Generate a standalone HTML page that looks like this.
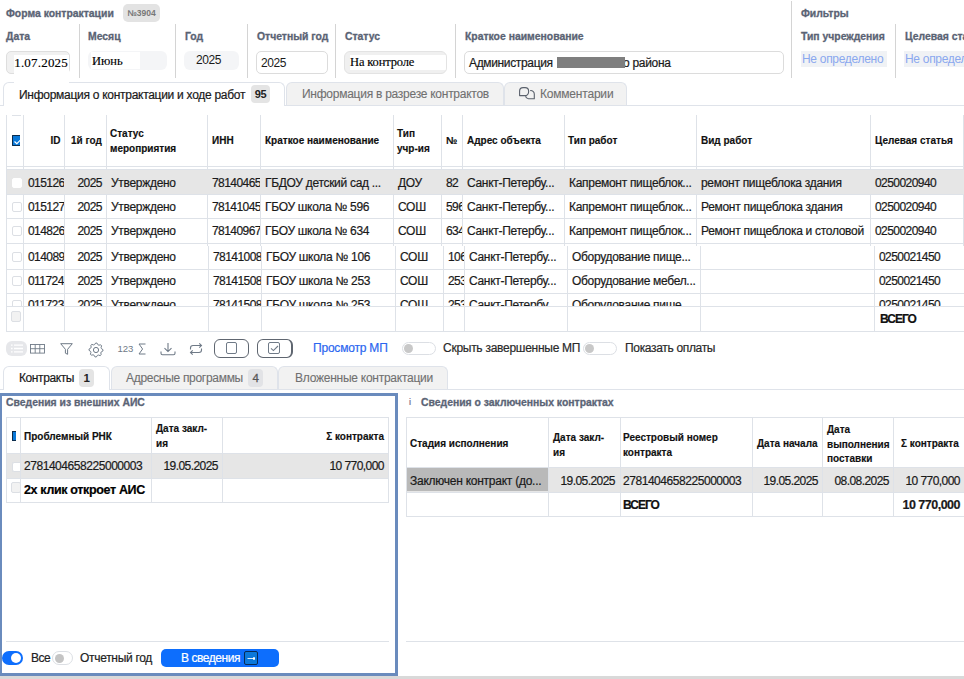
<!DOCTYPE html><html><head><meta charset="utf-8"><style>
*{box-sizing:border-box;margin:0;padding:0}
html,body{width:964px;height:679px;overflow:hidden;background:#fff;font-family:"Liberation Sans",sans-serif;color:#1a1a1a;position:relative}
.a{position:absolute}
.lbl{position:absolute;font-weight:bold;font-size:10.4px;color:#5a6374;white-space:nowrap;line-height:12px;-webkit-text-stroke:0.3px #5a6374}
.vsep{position:absolute;width:1px;background:#d4d4d4}
.t{position:absolute;white-space:nowrap;font-size:12px;letter-spacing:-0.3px;line-height:14px;-webkit-text-stroke:0.2px currentColor}
.th{position:absolute;white-space:nowrap;font-size:10px;font-weight:bold;line-height:14px;color:#111;-webkit-text-stroke:0.15px #111}
.tab{position:absolute;border:1px solid #dfe3ea;border-bottom:none;border-radius:6px 6px 0 0;background:#f2f2f2;color:#707070;font-size:12px;letter-spacing:-0.25px;white-space:nowrap}
.tab.on{background:#fff;color:#1a1a1a}
.tab:not(.on) .t{-webkit-text-stroke:0.1px #707070}
.badge{position:absolute;background:#e4e4e4;border-radius:4px;font-weight:bold;font-size:11px;color:#222;text-align:center}
.hl{position:absolute;height:1px;background:#dee2e8}
.vl{position:absolute;width:1px;background:#dee2e8}
.cb{position:absolute;width:10px;height:10px;border:1px solid #dcdfe4;border-radius:2px;background:#fff}
.clip{position:absolute;overflow:hidden}
.num{letter-spacing:-0.55px}
</style></head><body>
<div class="lbl" style="left:6px;top:8px">Форма контрактации</div>
<div class="a" style="left:123px;top:4px;width:37px;height:18px;background:#e3e3e3;border-radius:5px;font-size:8.5px;font-weight:bold;color:#777;text-align:center;line-height:18px">№3904</div>
<div class="vsep" style="left:79px;top:24px;height:54px"></div>
<div class="vsep" style="left:175px;top:24px;height:54px"></div>
<div class="vsep" style="left:247px;top:24px;height:54px"></div>
<div class="vsep" style="left:335px;top:24px;height:54px"></div>
<div class="vsep" style="left:455px;top:24px;height:54px"></div>
<div class="vsep" style="left:895px;top:24px;height:54px"></div>
<div class="vsep" style="left:791px;top:1px;height:77px"></div>
<div class="lbl" style="left:6px;top:31px">Дата</div>
<div class="lbl" style="left:88px;top:31px">Месяц</div>
<div class="lbl" style="left:185px;top:31px">Год</div>
<div class="lbl" style="left:257px;top:31px">Отчетный год</div>
<div class="lbl" style="left:345px;top:31px">Статус</div>
<div class="lbl" style="left:465px;top:31px">Краткое наименование</div>
<div class="lbl" style="left:801px;top:31px">Тип учреждения</div>
<div class="lbl" style="left:905px;top:31px">Целевая статья</div>
<div class="lbl" style="left:801px;top:8px">Фильтры</div>
<div class="a" style="left:6px;top:51px;width:64px;height:23px;border:1px solid #dedede;border-radius:5px;background:#f1f1f1"></div>
<div class="clip" style="left:14px;top:55px;width:55px;height:28px;background:#fff;z-index:5"><div class="a" style="left:-6px;top:1px;font-family:'Liberation Serif',serif;font-size:13px;line-height:14px;letter-spacing:0.2px;white-space:nowrap;color:#000;-webkit-text-stroke:0.15px #000">11.07.2025</div></div>
<div class="a" style="left:88px;top:51px;width:79px;height:19px;border-radius:6px;background:#f4f5f7">
  <div class="a" style="left:3px;top:1px;width:49px;height:17px;background:#fff;font-family:'Liberation Serif',serif;font-size:12.5px;line-height:18px;padding-left:1px;color:#000;-webkit-text-stroke:0.15px #000">Июнь</div></div>
<div class="a" style="left:184px;top:51px;width:55px;height:19px;border-radius:6px;background:#f4f5f7;font-size:12px;line-height:18px;padding-left:12px;letter-spacing:-0.4px">2025</div>
<div class="a" style="left:256px;top:51px;width:72px;height:23px;border:1px solid #dcdcdc;border-radius:5px;background:#fff;font-size:12px;line-height:22px;padding-left:4px;letter-spacing:-0.4px">2025</div>
<div class="a" style="left:344px;top:51px;width:103px;height:23px;border:1px solid #e3e3e3;border-radius:6px;background:#f0f0f0;overflow:hidden">
  <div class="a" style="left:5px;top:3px;width:98px;height:15px;background:#fff;font-family:'Liberation Serif',serif;font-size:12.5px;line-height:15px;letter-spacing:-0.15px;white-space:nowrap;color:#000;-webkit-text-stroke:0.15px #000">На контроле</div></div>
<div class="a" style="left:464px;top:51px;width:320px;height:23px;border:1px solid #dcdcdc;border-radius:5px;background:#fff"></div>
<div class="t" style="left:469px;top:56px;letter-spacing:-0.35px">Администрация</div>
<div class="t" style="left:623px;top:56px;letter-spacing:-0.3px">о района</div>
<div class="a" style="left:557px;top:57px;width:68px;height:11px;background:#7f7f7f"></div>
<div class="a" style="left:801px;top:51px;width:86px;height:16px;background:#f0f2f5;color:#8aa8ef;font-size:12px;line-height:16px;padding-left:1px;letter-spacing:-0.3px;white-space:nowrap">Не определено</div>
<div class="a" style="left:904px;top:51px;width:60px;height:16px;background:#f0f2f5;color:#8aa8ef;font-size:12px;line-height:16px;padding-left:1px;letter-spacing:-0.3px;overflow:hidden;white-space:nowrap">Не определено</div>
<div class="a" style="left:0;top:105px;width:964px;height:1px;background:#dfe3ea"></div>
<div class="tab on" style="left:3px;top:82px;width:282px;height:24px">
  <div class="t" style="left:15px;top:5px;letter-spacing:-0.28px">Информация о контрактации и ходе работ</div>
  <div class="badge" style="left:247px;top:2px;width:19px;height:18px;line-height:18px">95</div></div>
<div class="tab" style="left:286px;top:82px;width:218px;height:23px">
  <div class="t" style="left:15px;top:4px;letter-spacing:-0.26px">Информация в разрезе контрактов</div></div>
<div class="tab" style="left:504px;top:82px;width:123px;height:23px">
  <svg class="a" style="left:13px;top:3px" width="18" height="14" viewBox="0 0 18 14"><g fill="none" stroke="#5a616c" stroke-width="1.1" stroke-linejoin="round"><path d="M1.6 9.6V5.1A3.5 3.5 0 0 1 5.1 1.6h2A3.5 3.5 0 0 1 10.6 5.1v1A3.5 3.5 0 0 1 7.1 9.6z"/><path d="M12.2 4.6A3.5 3.5 0 0 1 16.3 8v4.8H10.4A3.2 3.2 0 0 1 7.6 10.1"/></g></svg>
  <div class="t" style="left:35px;top:4px;letter-spacing:-0.2px">Комментарии</div></div>
<div class="hl" style="left:12px;top:115px;width:9px"></div>
<div class="vl" style="left:6px;top:115px;height:128px"></div>
<div class="vl" style="left:23px;top:115px;height:128px"></div>
<div class="vl" style="left:64px;top:115px;height:128px"></div>
<div class="vl" style="left:106px;top:115px;height:128px"></div>
<div class="vl" style="left:207px;top:115px;height:128px"></div>
<div class="vl" style="left:260px;top:115px;height:128px"></div>
<div class="vl" style="left:393px;top:115px;height:128px"></div>
<div class="vl" style="left:441px;top:115px;height:128px"></div>
<div class="vl" style="left:462px;top:115px;height:128px"></div>
<div class="vl" style="left:564px;top:115px;height:128px"></div>
<div class="vl" style="left:696px;top:115px;height:128px"></div>
<div class="vl" style="left:870px;top:115px;height:128px"></div>
<div class="vl" style="left:963px;top:115px;height:128px"></div>
<div class="hl" style="left:6px;top:166px;width:958px"></div>
<div class="hl" style="left:6px;top:169px;width:958px"></div>
<div class="a" style="left:12px;top:135px;width:8px;height:11px;background:#0a78d8;border:1px solid #0b2c4c;border-right:none;border-radius:1px 0 0 1px;overflow:hidden"><svg class="a" style="left:1px;top:2px" width="8" height="7"><path d="M0.5 3.5L2.8 5.6 7.5 1" fill="none" stroke="#fff" stroke-width="1.2"/></svg></div>
<div class="th" style="left:20.5px;width:40px;text-align:right;top:134px">ID</div>
<div class="th" style="left:71px;top:134px">1й год</div>
<div class="th" style="left:212px;top:134px">ИНН</div>
<div class="th" style="left:265px;top:134px">Краткое наименование</div>
<div class="th" style="left:446px;top:134px">№</div>
<div class="th" style="left:467px;top:134px">Адрес объекта</div>
<div class="th" style="left:568px;top:134px">Тип работ</div>
<div class="th" style="left:701px;top:134px">Вид работ</div>
<div class="th" style="left:875px;top:134px">Целевая статья</div>
<div class="th" style="left:110px;top:126px;line-height:15px">Статус<br>мероприятия</div>
<div class="th" style="left:397px;top:126px;line-height:15px">Тип<br>учр-ия</div>
<div class="a" style="left:7px;top:170px;width:957px;height:24px;background:#e6e6e6"></div>
<div class="cb" style="border-color:#fff;left:12px;top:178px"></div>
<div class="clip" style="left:24px;top:170px;width:40px;height:24px"><div class="t num" style="left:4px;top:6px">015126</div></div>
<div class="clip" style="left:65px;top:170px;width:41px;height:24px"><div class="t num" style="right:4px;top:6px">2025</div></div>
<div class="clip" style="left:107px;top:170px;width:100px;height:24px"><div class="t" style="left:4px;top:6px">Утверждено</div></div>
<div class="clip" style="left:208px;top:170px;width:52px;height:24px"><div class="t num" style="left:4px;top:6px">78140465</div></div>
<div class="clip" style="left:261px;top:170px;width:132px;height:24px"><div class="t" style="left:4px;top:6px">ГБДОУ детский сад ...</div></div>
<div class="clip" style="left:394px;top:170px;width:47px;height:24px"><div class="t" style="left:4px;top:6px">ДОУ</div></div>
<div class="clip" style="left:442px;top:170px;width:20px;height:24px"><div class="t num" style="left:4px;top:6px">82</div></div>
<div class="clip" style="left:463px;top:170px;width:101px;height:24px"><div class="t" style="left:4px;top:6px">Санкт-Петербу...</div></div>
<div class="clip" style="left:565px;top:170px;width:131px;height:24px"><div class="t" style="left:4px;top:6px">Капремонт пищеблок...</div></div>
<div class="clip" style="left:697px;top:170px;width:173px;height:24px"><div class="t" style="left:4px;top:6px">ремонт пищеблока здания</div></div>
<div class="clip" style="left:871px;top:170px;width:92px;height:24px"><div class="t num" style="left:4px;top:6px">0250020940</div></div>
<div class="cb" style="left:12px;top:202px"></div>
<div class="clip" style="left:24px;top:195px;width:40px;height:23px"><div class="t num" style="left:4px;top:5px">015127</div></div>
<div class="clip" style="left:65px;top:195px;width:41px;height:23px"><div class="t num" style="right:4px;top:5px">2025</div></div>
<div class="clip" style="left:107px;top:195px;width:100px;height:23px"><div class="t" style="left:4px;top:5px">Утверждено</div></div>
<div class="clip" style="left:208px;top:195px;width:52px;height:23px"><div class="t num" style="left:4px;top:5px">78141045</div></div>
<div class="clip" style="left:261px;top:195px;width:132px;height:23px"><div class="t" style="left:4px;top:5px">ГБОУ школа № 596</div></div>
<div class="clip" style="left:394px;top:195px;width:47px;height:23px"><div class="t" style="left:4px;top:5px">СОШ</div></div>
<div class="clip" style="left:442px;top:195px;width:20px;height:23px"><div class="t num" style="left:4px;top:5px">596</div></div>
<div class="clip" style="left:463px;top:195px;width:101px;height:23px"><div class="t" style="left:4px;top:5px">Санкт-Петербу...</div></div>
<div class="clip" style="left:565px;top:195px;width:131px;height:23px"><div class="t" style="left:4px;top:5px">Капремонт пищеблок...</div></div>
<div class="clip" style="left:697px;top:195px;width:173px;height:23px"><div class="t" style="left:4px;top:5px">Ремонт пищеблока здания</div></div>
<div class="clip" style="left:871px;top:195px;width:92px;height:23px"><div class="t num" style="left:4px;top:5px">0250020940</div></div>
<div class="cb" style="left:12px;top:226px"></div>
<div class="clip" style="left:24px;top:219px;width:40px;height:24px"><div class="t num" style="left:4px;top:5px">014826</div></div>
<div class="clip" style="left:65px;top:219px;width:41px;height:24px"><div class="t num" style="right:4px;top:5px">2025</div></div>
<div class="clip" style="left:107px;top:219px;width:100px;height:24px"><div class="t" style="left:4px;top:5px">Утверждено</div></div>
<div class="clip" style="left:208px;top:219px;width:52px;height:24px"><div class="t num" style="left:4px;top:5px">78140967</div></div>
<div class="clip" style="left:261px;top:219px;width:132px;height:24px"><div class="t" style="left:4px;top:5px">ГБОУ школа № 634</div></div>
<div class="clip" style="left:394px;top:219px;width:47px;height:24px"><div class="t" style="left:4px;top:5px">СОШ</div></div>
<div class="clip" style="left:442px;top:219px;width:20px;height:24px"><div class="t num" style="left:4px;top:5px">634</div></div>
<div class="clip" style="left:463px;top:219px;width:101px;height:24px"><div class="t" style="left:4px;top:5px">Санкт-Петербу...</div></div>
<div class="clip" style="left:565px;top:219px;width:131px;height:24px"><div class="t" style="left:4px;top:5px">Капремонт пищеблок...</div></div>
<div class="clip" style="left:697px;top:219px;width:173px;height:24px"><div class="t" style="left:4px;top:5px">Ремонт пищеблока и столовой</div></div>
<div class="clip" style="left:871px;top:219px;width:92px;height:24px"><div class="t num" style="left:4px;top:5px">0250020940</div></div>
<div class="hl" style="left:6px;top:194px;width:958px"></div>
<div class="hl" style="left:6px;top:218px;width:958px"></div>
<div class="a" style="left:0;top:243px;width:964px;height:89px;background:#fff"></div>
<div class="clip" style="left:0;top:243px;width:964px;height:63px">
<div class="vl" style="left:6px;top:3px;height:60px"></div>
<div class="vl" style="left:23px;top:3px;height:60px"></div>
<div class="vl" style="left:64px;top:3px;height:60px"></div>
<div class="vl" style="left:106px;top:3px;height:60px"></div>
<div class="vl" style="left:208px;top:3px;height:60px"></div>
<div class="vl" style="left:261px;top:3px;height:60px"></div>
<div class="vl" style="left:395px;top:3px;height:60px"></div>
<div class="vl" style="left:443px;top:3px;height:60px"></div>
<div class="vl" style="left:464px;top:3px;height:60px"></div>
<div class="vl" style="left:567px;top:3px;height:60px"></div>
<div class="vl" style="left:700px;top:3px;height:60px"></div>
<div class="vl" style="left:874px;top:3px;height:60px"></div>
<div class="vl" style="left:6px;top:0px;height:3px"></div>
<div class="vl" style="left:23px;top:0px;height:3px"></div>
<div class="vl" style="left:64px;top:0px;height:3px"></div>
<div class="vl" style="left:106px;top:0px;height:3px"></div>
<div class="vl" style="left:207px;top:0px;height:3px"></div>
<div class="vl" style="left:260px;top:0px;height:3px"></div>
<div class="vl" style="left:393px;top:0px;height:3px"></div>
<div class="vl" style="left:441px;top:0px;height:3px"></div>
<div class="vl" style="left:462px;top:0px;height:3px"></div>
<div class="vl" style="left:564px;top:0px;height:3px"></div>
<div class="vl" style="left:696px;top:0px;height:3px"></div>
<div class="vl" style="left:870px;top:0px;height:3px"></div>
<div class="vl" style="left:963px;top:0px;height:3px"></div>
<div class="cb" style="left:12px;top:9px"></div>
<div class="clip" style="left:24px;top:1px;width:40px;height:25px"><div class="t num" style="left:4px;top:6px">014089</div></div>
<div class="clip" style="left:65px;top:1px;width:41px;height:25px"><div class="t num" style="right:4px;top:6px">2025</div></div>
<div class="clip" style="left:107px;top:1px;width:101px;height:25px"><div class="t" style="left:4px;top:6px">Утверждено</div></div>
<div class="clip" style="left:209px;top:1px;width:52px;height:25px"><div class="t num" style="left:4px;top:6px">78141008</div></div>
<div class="clip" style="left:262px;top:1px;width:133px;height:25px"><div class="t" style="left:4px;top:6px">ГБОУ школа № 106</div></div>
<div class="clip" style="left:396px;top:1px;width:47px;height:25px"><div class="t" style="left:4px;top:6px">СОШ</div></div>
<div class="clip" style="left:444px;top:1px;width:20px;height:25px"><div class="t num" style="left:4px;top:6px">106</div></div>
<div class="clip" style="left:465px;top:1px;width:102px;height:25px"><div class="t" style="left:4px;top:6px">Санкт-Петербу...</div></div>
<div class="clip" style="left:568px;top:1px;width:132px;height:25px"><div class="t" style="left:4px;top:6px">Оборудование пище...</div></div>
<div class="clip" style="left:875px;top:1px;width:89px;height:25px"><div class="t num" style="left:4px;top:6px">0250021450</div></div>
<div class="cb" style="left:12px;top:33px"></div>
<div class="clip" style="left:24px;top:27px;width:40px;height:23px"><div class="t num" style="left:4px;top:4px">011724</div></div>
<div class="clip" style="left:65px;top:27px;width:41px;height:23px"><div class="t num" style="right:4px;top:4px">2025</div></div>
<div class="clip" style="left:107px;top:27px;width:101px;height:23px"><div class="t" style="left:4px;top:4px">Утверждено</div></div>
<div class="clip" style="left:209px;top:27px;width:52px;height:23px"><div class="t num" style="left:4px;top:4px">78141508</div></div>
<div class="clip" style="left:262px;top:27px;width:133px;height:23px"><div class="t" style="left:4px;top:4px">ГБОУ школа № 253</div></div>
<div class="clip" style="left:396px;top:27px;width:47px;height:23px"><div class="t" style="left:4px;top:4px">СОШ</div></div>
<div class="clip" style="left:444px;top:27px;width:20px;height:23px"><div class="t num" style="left:4px;top:4px">253</div></div>
<div class="clip" style="left:465px;top:27px;width:102px;height:23px"><div class="t" style="left:4px;top:4px">Санкт-Петербу...</div></div>
<div class="clip" style="left:568px;top:27px;width:132px;height:23px"><div class="t" style="left:4px;top:4px">Оборудование мебел...</div></div>
<div class="clip" style="left:875px;top:27px;width:89px;height:23px"><div class="t num" style="left:4px;top:4px">0250021450</div></div>
<div class="cb" style="left:12px;top:57px"></div>
<div class="clip" style="left:24px;top:51px;width:40px;height:25px"><div class="t num" style="left:4px;top:4px">011723</div></div>
<div class="clip" style="left:65px;top:51px;width:41px;height:25px"><div class="t num" style="right:4px;top:4px">2025</div></div>
<div class="clip" style="left:107px;top:51px;width:101px;height:25px"><div class="t" style="left:4px;top:4px">Утверждено</div></div>
<div class="clip" style="left:209px;top:51px;width:52px;height:25px"><div class="t num" style="left:4px;top:4px">78141508</div></div>
<div class="clip" style="left:262px;top:51px;width:133px;height:25px"><div class="t" style="left:4px;top:4px">ГБОУ школа № 253</div></div>
<div class="clip" style="left:396px;top:51px;width:47px;height:25px"><div class="t" style="left:4px;top:4px">СОШ</div></div>
<div class="clip" style="left:444px;top:51px;width:20px;height:25px"><div class="t num" style="left:4px;top:4px">253</div></div>
<div class="clip" style="left:465px;top:51px;width:102px;height:25px"><div class="t" style="left:4px;top:4px">Санкт-Петербу...</div></div>
<div class="clip" style="left:568px;top:51px;width:132px;height:25px"><div class="t" style="left:4px;top:4px">Оборудование пище...</div></div>
<div class="clip" style="left:875px;top:51px;width:89px;height:25px"><div class="t num" style="left:4px;top:4px">0250021450</div></div>
<div class="hl" style="left:6px;top:0px;width:958px"></div>
<div class="hl" style="left:6px;top:26px;width:958px"></div>
<div class="hl" style="left:6px;top:50px;width:958px"></div>
</div>
<div class="hl" style="left:6px;top:306px;width:958px"></div>
<div class="hl" style="left:6px;top:331px;width:958px"></div>
<div class="vl" style="left:6px;top:306px;height:25px"></div>
<div class="vl" style="left:23px;top:306px;height:25px"></div>
<div class="vl" style="left:64px;top:306px;height:25px"></div>
<div class="vl" style="left:106px;top:306px;height:25px"></div>
<div class="vl" style="left:208px;top:306px;height:25px"></div>
<div class="vl" style="left:261px;top:306px;height:25px"></div>
<div class="vl" style="left:395px;top:306px;height:25px"></div>
<div class="vl" style="left:443px;top:306px;height:25px"></div>
<div class="vl" style="left:464px;top:306px;height:25px"></div>
<div class="vl" style="left:567px;top:306px;height:25px"></div>
<div class="vl" style="left:700px;top:306px;height:25px"></div>
<div class="vl" style="left:874px;top:306px;height:25px"></div>
<div class="cb" style="left:11px;top:311px;background:#f2f2f2;width:10px;height:11px"></div>
<div class="t" style="left:880px;top:312px;font-weight:bold;font-size:12px;letter-spacing:-1px;color:#111">ВСЕГО</div>
<div class="a" style="left:6px;top:341px;width:21px;height:15px;background:#e6e7ea;border-radius:6px"></div>
<svg class="a" style="left:6px;top:341px" width="21" height="15"><g stroke="#fff" stroke-width="1.3"><path d="M5 4.2h1.6M5 7.5h1.6M5 10.8h1.6"/><path d="M8 4.2h9M8 7.5h9M8 10.8h9"/></g></svg>
<svg class="a" style="left:30px;top:344px" width="15" height="10"><g fill="none" stroke="#6f7a87" stroke-width="0.9"><rect x="0.5" y="0.5" width="14" height="8.6"/><path d="M0.5 4.7h14M5.2 0.5v8.6M9.8 0.5v8.6"/></g></svg>
<svg class="a" style="left:60px;top:343px" width="13" height="12"><path d="M0.7 0.7h11.6L7.6 6.3v5L5.4 10.2V6.3z" fill="none" stroke="#6f7a87" stroke-width="1" stroke-linejoin="round"/></svg>
<svg class="a" style="left:87.5px;top:341.5px" width="16" height="16" viewBox="0 0 16 16"><path d="M7.66 1.01 L9.03 1.08 L9.89 2.73 L10.88 3.20 L12.70 2.81 L13.62 3.83 L13.06 5.61 L13.43 6.64 L14.99 7.66 L14.92 9.03 L13.27 9.89 L12.80 10.88 L13.19 12.70 L12.17 13.62 L10.39 13.06 L9.36 13.43 L8.34 14.99 L6.97 14.92 L6.11 13.27 L5.12 12.80 L3.30 13.19 L2.38 12.17 L2.94 10.39 L2.57 9.36 L1.01 8.34 L1.08 6.97 L2.73 6.11 L3.20 5.12 L2.81 3.30 L3.83 2.38 L5.61 2.94 L6.64 2.57Z" fill="none" stroke="#6f7a87" stroke-width="0.95" stroke-linejoin="round"/><circle cx="8" cy="8" r="2.6" fill="none" stroke="#6f7a87" stroke-width="1"/></svg>
<div class="a" style="left:117.5px;top:343px;font-size:9.6px;color:#6f7a87;letter-spacing:-0.1px;line-height:12px">123</div>
<svg class="a" style="left:138px;top:343px" width="9" height="12"><path d="M7.5 1H1l3.6 5L1 11h6.5" fill="none" stroke="#6f7a87" stroke-width="1"/></svg>
<svg class="a" style="left:160px;top:342px" width="16" height="14"><g fill="none" stroke="#6f7a87" stroke-width="1.1"><path d="M8 1v8.5M4.5 6.2L8 9.6l3.5-3.4M1 9.5v1.7c0 .9.6 1.5 1.5 1.5h11c.9 0 1.5-.6 1.5-1.5V9.5"/></g></svg>
<svg class="a" style="left:188px;top:342px" width="16" height="14"><g fill="none" stroke="#6f7a87" stroke-width="1.1"><path d="M2.5 7.5V6c0-1.4 1-2.5 2.5-2.5h8.5M11.3 1.3l2.2 2.2-2.2 2.2M13.5 6.5V8c0 1.4-1 2.5-2.5 2.5H2.5M4.7 8.3l-2.2 2.2 2.2 2.2"/></g></svg>
<div class="a" style="left:214px;top:339px;width:35px;height:19px;border:1.2px solid #5f6670;border-radius:6px"></div>
<div class="a" style="left:226px;top:342px;width:11px;height:12px;border:1.2px solid #6f7a87;border-radius:2px"></div>
<div class="a" style="left:257px;top:339px;width:36px;height:19px;border:1.2px solid #5f6670;border-radius:6px;border-right-width:2px"></div>
<div class="a" style="left:268px;top:342px;width:12px;height:12px;border:1.2px solid #6f7a87;border-radius:2px"></div>
<svg class="a" style="left:270px;top:345px" width="9" height="7"><path d="M1 3.4L3.4 5.6 8 1" fill="none" stroke="#6f7a87" stroke-width="1.1"/></svg>
<div class="t" style="left:313px;top:341px;color:#2b66f0;letter-spacing:-0.2px">Просмотр МП</div>
<div class="a" style="left:402px;top:342px;width:34px;height:13px;border-radius:7px;border:1px solid #dcdfe4;background:#fff"><div class="a" style="left:1px;top:1px;width:9px;height:9px;border-radius:50%;background:#c8c8c8"></div></div>
<div class="t" style="left:443px;top:341px;color:#2a2a2a;letter-spacing:-0.27px">Скрыть завершенные МП</div>
<div class="a" style="left:583px;top:342px;width:34px;height:13px;border-radius:7px;border:1px solid #dcdfe4;background:#fff"><div class="a" style="left:1px;top:1px;width:9px;height:9px;border-radius:50%;background:#c8c8c8"></div></div>
<div class="t" style="left:625px;top:341px;color:#2a2a2a;letter-spacing:-0.33px">Показать оплаты</div>
<div class="a" style="left:0;top:389px;width:964px;height:1px;background:#dfe3ea"></div>
<div class="tab on" style="left:3px;top:366px;width:107px;height:24px">
  <div class="t" style="left:15px;top:4px;letter-spacing:-0.4px">Контракты</div>
  <div class="badge" style="left:75px;top:2px;width:15px;height:18px;line-height:18px;font-size:11.5px">1</div></div>
<div class="tab" style="left:111px;top:366px;width:167px;height:23px">
  <div class="t" style="left:14px;top:4px;letter-spacing:-0.3px">Адресные программы</div>
  <div class="badge" style="left:136px;top:2px;width:15px;height:18px;line-height:18px;color:#555;background:#e2e3e6;font-weight:normal;font-size:11.5px;-webkit-text-stroke:0.3px #555">4</div></div>
<div class="tab" style="left:278px;top:366px;width:170px;height:23px">
  <div class="t" style="left:16px;top:4px;letter-spacing:-0.25px">Вложенные контрактации</div></div>
<div class="a" style="left:-1px;top:393px;width:399px;height:283px;border:3px solid #6a8bbd"></div>
<div class="lbl" style="left:6px;top:397px;font-size:10.4px;color:#5c6577">Сведения из внешних АИС</div>
<div class="hl" style="left:6px;top:417px;width:383px"></div>
<div class="vl" style="left:6px;top:417px;height:86px"></div>
<div class="vl" style="left:20px;top:417px;height:86px"></div>
<div class="vl" style="left:151px;top:417px;height:86px"></div>
<div class="vl" style="left:222px;top:417px;height:86px"></div>
<div class="vl" style="left:388px;top:417px;height:86px"></div>
<div class="a" style="left:7px;top:453px;width:381px;height:25px;background:#e6e6e6"></div>
<div class="hl" style="left:6px;top:453px;width:383px"></div>
<div class="hl" style="left:6px;top:478px;width:383px"></div>
<div class="hl" style="left:6px;top:502px;width:383px"></div>
<div class="vl" style="left:20px;top:453px;height:50px"></div>
<div class="vl" style="left:151px;top:453px;height:50px"></div>
<div class="vl" style="left:222px;top:453px;height:50px"></div>
<div class="a" style="left:12px;top:431px;width:4px;height:10px;background:#0a78d8;border:1px solid #0b2c4c;border-right:none"></div>
<div class="th" style="left:24px;top:430px">Проблемный РНК</div>
<div class="th" style="left:156px;top:421px;line-height:15px">Дата закл-<br>ия</div>
<div class="th" style="left:284px;width:100px;text-align:right;top:430px">Σ контракта</div>
<div class="clip" style="left:12px;top:462px;width:8px;height:10px"><div class="cb" style="left:0;top:0;border-right:none"></div></div>
<div class="clip" style="left:11px;top:482px;width:9px;height:11px"><div class="cb" style="left:0;top:0;background:#f2f2f2;height:11px"></div></div>
<div class="t num" style="left:24px;top:459px;letter-spacing:-0.45px">2781404658225000003</div>
<div class="t num" style="left:158px;width:60px;text-align:right;top:459px">19.05.2025</div>
<div class="t num" style="left:284px;width:100px;text-align:right;top:459px">10 770,000</div>
<div class="t" style="left:24px;top:483px;font-weight:bold;font-size:12.5px;letter-spacing:-0.35px;color:#000">2х клик откроет АИС</div>
<div class="hl" style="left:6px;top:641px;width:383px"></div>
<div class="a" style="left:2px;top:651px;width:21px;height:14px;border-radius:8px;background:#0d6efd"><div class="a" style="right:2px;top:2px;width:10px;height:10px;border-radius:50%;background:#fff"></div></div>
<div class="t" style="left:31px;top:651px;color:#222;letter-spacing:-0.5px">Все</div>
<div class="a" style="left:52px;top:651px;width:21px;height:14px;border-radius:7px;border:1px solid #dcdfe4;background:#fff"><div class="a" style="left:2px;top:2px;width:9px;height:9px;border-radius:50%;background:#c4c4c4"></div></div>
<div class="t" style="left:80px;top:651px;color:#222;letter-spacing:-0.3px">Отчетный год</div>
<div class="a" style="left:161px;top:649px;width:118px;height:18px;border-radius:5px;background:#0d6efd"></div>
<div class="t" style="left:181px;top:651px;color:#fff;letter-spacing:-0.45px">В сведения</div>
<div class="a" style="left:244px;top:651px;width:14px;height:14px;background:#0b78da;border:1px solid #082a55;border-radius:2px"><svg class="a" style="left:2px;top:4px" width="9" height="5"><path d="M0.5 2.5h6" stroke="#dfefff" stroke-width="1"/><rect x="6" y="1.3" width="2" height="2.4" fill="#fff"/></svg></div>
<div class="a" style="left:409px;top:396px;font-size:9px;line-height:12px;color:#6d6a8a;-webkit-text-stroke:0.2px #6d6a8a">i</div>
<div class="lbl" style="left:421px;top:397px;font-size:10.4px;color:#5c6577">Сведения о заключенных контрактах</div>
<div class="hl" style="left:406px;top:417px;width:558px"></div>
<div class="vl" style="left:406px;top:417px;height:100px"></div>
<div class="vl" style="left:548px;top:417px;height:100px"></div>
<div class="vl" style="left:620px;top:417px;height:100px"></div>
<div class="vl" style="left:752px;top:417px;height:100px"></div>
<div class="vl" style="left:822px;top:417px;height:100px"></div>
<div class="vl" style="left:893px;top:417px;height:100px"></div>
<div class="a" style="left:407px;top:468px;width:557px;height:24px;background:#e6e6e6"></div>
<div class="a" style="left:407px;top:468px;width:141px;height:23px;background:#b9b9b9"></div>
<div class="hl" style="left:406px;top:467px;width:558px"></div>
<div class="hl" style="left:406px;top:492px;width:558px"></div>
<div class="hl" style="left:406px;top:516px;width:558px"></div>
<div class="vl" style="left:548px;top:467px;height:50px"></div>
<div class="vl" style="left:620px;top:467px;height:50px"></div>
<div class="vl" style="left:752px;top:467px;height:50px"></div>
<div class="vl" style="left:822px;top:467px;height:50px"></div>
<div class="vl" style="left:893px;top:467px;height:50px"></div>
<div class="th" style="left:410px;top:437px">Стадия исполнения</div>
<div class="th" style="left:553px;top:430px;line-height:15px">Дата закл-<br>ия</div>
<div class="th" style="left:623px;top:430px;line-height:15px">Реестровый номер<br>контракта</div>
<div class="th" style="left:757px;top:437px">Дата начала</div>
<div class="th" style="left:827px;top:423px;line-height:14.5px">Дата<br>выполнения<br>поставки</div>
<div class="th" style="left:901px;top:437px">Σ контракта</div>
<div class="t" style="left:410px;top:474px;letter-spacing:-0.25px">Заключен контракт (до...</div>
<div class="t num" style="left:555px;width:60px;text-align:right;top:474px">19.05.2025</div>
<div class="t num" style="left:623px;top:474px;letter-spacing:-0.45px">2781404658225000003</div>
<div class="t num" style="left:758px;width:60px;text-align:right;top:474px">19.05.2025</div>
<div class="t num" style="left:829px;width:60px;text-align:right;top:474px">08.08.2025</div>
<div class="clip" style="left:894px;top:467px;width:70px;height:48px"><div class="t num" style="right:4px;top:7px">10 770,000</div><div class="t num" style="right:4px;top:31px;font-weight:bold;font-size:12.5px;letter-spacing:-0.5px">10 770,000</div></div>
<div class="t" style="left:623px;top:498px;font-weight:bold;font-size:12px;letter-spacing:-1px;color:#111">ВСЕГО</div>
<div class="hl" style="left:406px;top:641px;width:558px"></div>
<div class="a" style="left:0;top:676px;width:964px;height:3px;background:#d9d9d9"></div>
</body></html>
